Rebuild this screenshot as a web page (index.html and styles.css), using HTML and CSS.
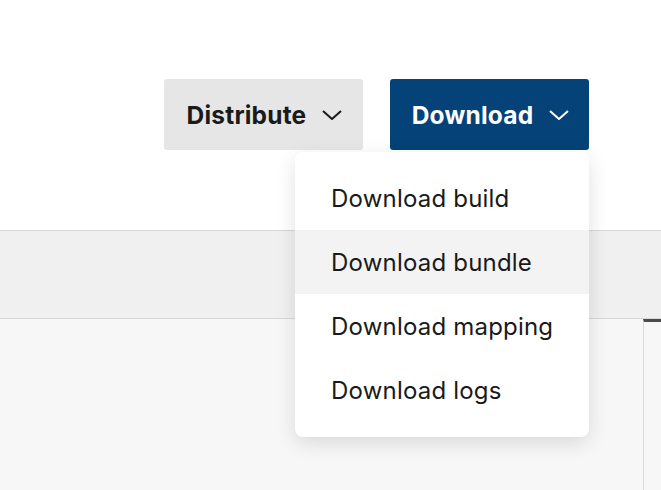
FILE: index.html
```html
<!DOCTYPE html>
<html>
<head>
<meta charset="utf-8">
<link rel="stylesheet" href="styles.css">
</head>
<body>
<div class="page">
  <header class="top">
    <div class="actions">
      <button class="btn btn-secondary">
        <span>Distribute</span>
        <svg class="chev" viewBox="0 0 20 10" width="20" height="10"><path d="M1 1 L10 9 L19 1" fill="none" stroke="currentColor" stroke-width="2"/></svg>
      </button>
      <button class="btn btn-primary">
        <span>Download</span>
        <svg class="chev" viewBox="0 0 20 10" width="20" height="10"><path d="M1 1 L10 9 L19 1" fill="none" stroke="currentColor" stroke-width="2"/></svg>
      </button>
    </div>
  </header>
  <div class="band"></div>
  <div class="content">
    <div class="main"></div>
    <div class="side"></div>
  </div>
  <ul class="menu">
    <li class="item">Download build</li>
    <li class="item active">Download bundle</li>
    <li class="item">Download mapping</li>
    <li class="item">Download logs</li>
  </ul>
</div>
</body>
</html>
```
FILE: styles.css
```css
html, body {
  margin: 0;
  padding: 0;
  background: #ffffff;
  font-family: Inter, "Liberation Sans", sans-serif;
}
.page {
  position: relative;
  width: 661px;
  height: 490px;
  overflow: hidden;
}
.top {
  height: 230px;
  box-sizing: border-box;
  padding: 79px 72px 0 0;
  display: flex;
  justify-content: flex-end;
  background: #ffffff;
}
.actions {
  display: flex;
  gap: 27px;
  height: 71px;
}
.btn {
  display: flex;
  align-items: center;
  justify-content: center;
  gap: 16px;
  width: 199px;
  height: 71px;
  border: 0;
  border-radius: 3px;
  font-family: Inter, "Liberation Sans", sans-serif;
  font-size: 24.5px;
  font-weight: 700;
  padding: 0 0 0 2px;
  letter-spacing: 0.2px;
}
.btn-secondary {
  background: #e6e6e6;
  color: #1a1a1a;
}
.btn-primary {
  background: #044277;
  color: #ffffff;
}
.chev {
  display: block;
}
.band {
  height: 87px;
  background: #f0f0f0;
  border-top: 1px solid #d8d8d8;
  border-bottom: 1px solid #d8d8d8;
}
.content {
  display: flex;
  height: 171px;
  background: #f7f7f7;
}
.main {
  flex: 1;
}
.side {
  width: 17px;
  border-left: 1px solid #dcdcdc;
  border-top: 3px solid #4a4a4a;
  background: #f7f7f7;
}
.menu {
  position: absolute;
  top: 152px;
  left: 295px;
  width: 294px;
  margin: 0;
  padding: 14px 0 15px;
  list-style: none;
  background: #ffffff;
  border-radius: 8px;
  box-shadow: 0 6px 20px rgba(0, 0, 0, 0.12);
}
.item {
  height: 64px;
  display: flex;
  align-items: center;
  padding-left: 36px;
  font-size: 24px;
  letter-spacing: 0.2px;
  color: #1a1a1a;
}
.item.active {
  background: #f3f3f3;
}
```
